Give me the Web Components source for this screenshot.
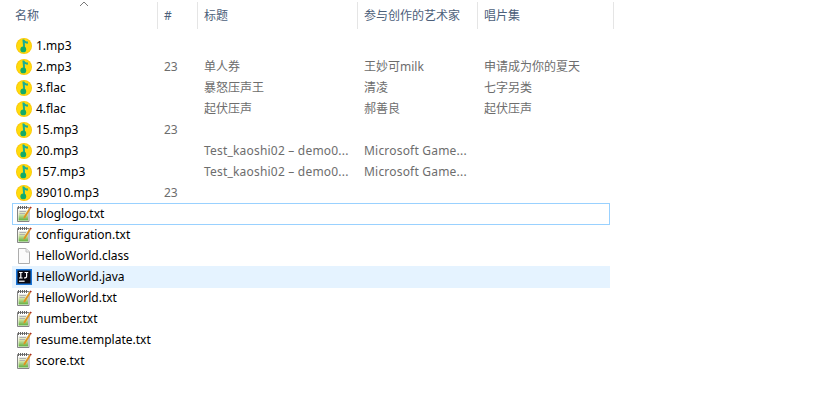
<!DOCTYPE html>
<html>
<head>
<meta charset="utf-8">
<title>files</title>
<style>
  html, body { margin: 0; background: #fff; }
</style>
</head>
<body>
<file-list>
  <file-head></file-head>
  <file-row type="qq" name="1.mp3"></file-row>
  <file-row type="qq" name="2.mp3" num="23" song="单人券" artist="王妙可milk" album="申请成为你的夏天"></file-row>
  <file-row type="qq" name="3.flac" song="暴怒压声王" artist="清凌" album="七字另类"></file-row>
  <file-row type="qq" name="4.flac" song="起伏压声" artist="郝善良" album="起伏压声"></file-row>
  <file-row type="qq" name="15.mp3" num="23"></file-row>
  <file-row type="qq" name="20.mp3" wide song="Test_kaoshi02 – demo0..." artist="Microsoft Game..."></file-row>
  <file-row type="qq" name="157.mp3" wide song="Test_kaoshi02 – demo0..." artist="Microsoft Game..."></file-row>
  <file-row type="qq" name="89010.mp3" num="23"></file-row>
  <file-row type="txt" name="bloglogo.txt" state="focus"></file-row>
  <file-row type="txt" name="configuration.txt"></file-row>
  <file-row type="blank" name="HelloWorld.class"></file-row>
  <file-row type="idea" name="HelloWorld.java" state="hover"></file-row>
  <file-row type="txt" name="HelloWorld.txt"></file-row>
  <file-row type="txt" name="number.txt"></file-row>
  <file-row type="txt" name="resume.template.txt"></file-row>
  <file-row type="txt" name="score.txt"></file-row>
</file-list>

<script>
const FONT = '"Noto Sans", "Noto Sans CJK SC", sans-serif';

// icons are all 16x16
const ICONS = {
  qq: `<svg width="16" height="16" viewBox="0 0 16 16">
    <circle cx="8" cy="8" r="8" fill="#fbc80a"/>
    <circle cx="8" cy="8" r="7.2" fill="#ffdb0c"/>
    <path d="M6.4 1.4 L8.2 1.4 C8.8 2.8 10.2 3.6 12 3.4 L11.8 5.8 C10.6 5.8 9.6 5.4 8.8 4.8 L9.2 11 L7.4 11 Z" fill="#17ad94"/>
    <circle cx="7.3" cy="11.4" r="2.9" fill="#12ab68"/>
  </svg>`,
  txt: `<svg width="16" height="16" viewBox="0 0 16 16">
    <defs>
      <linearGradient id="pad" x1="0" y1="0" x2="0" y2="1">
        <stop offset="0" stop-color="#ececec"/>
        <stop offset=".35" stop-color="#dfe9b4"/>
        <stop offset="1" stop-color="#5fae3c"/>
      </linearGradient>
      <linearGradient id="pen" x1="0" y1="0" x2="1" y2="1">
        <stop offset="0" stop-color="#f7b52c"/>
        <stop offset="1" stop-color="#c86f14"/>
      </linearGradient>
    </defs>
    <path d="M1.5 1.5 H13 V15.5 H1.5 Z" fill="#fff" stroke="#858585"/>
    <rect x="2.5" y="4" width="9.5" height="10.5" fill="url(#pad)"/>
    <path d="M2.5 0 V3 M4.5 0 V3 M6.5 0 V3 M8.5 0 V3 M10.5 0 V3" stroke="#666"/>
    <path d="M3.5 5.5 H10 M3.5 7.5 H9" stroke="#b0b0b0"/>
    <path d="M7.8 10.6 L13.4 1.8 L14.8 2.8 L9.4 11.6 L7.4 12.8 Z" fill="url(#pen)"/>
    <path d="M13.4 1.8 L14.4 .4 L15.8 1.4 L14.8 2.8 Z" fill="#a92c1a"/>
  </svg>`,
  blank: `<svg width="16" height="16" viewBox="0 0 16 16">
    <path d="M2.5 .5 H10 L13.5 4 V15.5 H2.5 Z" fill="#fbfbfb" stroke="#adadad"/>
    <path d="M10 .5 V4 H13.5" fill="#ececec" stroke="#c4c4c4"/>
  </svg>`,
  idea: `<svg width="16" height="16" viewBox="0 0 16 16">
    <rect x=".75" y=".75" width="14.5" height="14.5" fill="#0a0a12" stroke="#1a74d6" stroke-width="1.5"/>
    <path d="M3 3.5 H6.6 M4.8 3.5 V9 M3 9 H6.6 M10.6 3.5 V7.6 Q10.6 9 8 9 M8.6 3.5 H12.2" stroke="#fff" stroke-width="1.2" fill="none"/>
    <path d="M3 12.2 H8.6" stroke="#fff" stroke-width="1.2"/>
  </svg>`
};

const headTemplate = document.createElement('template');
headTemplate.innerHTML = `
  <style>
    :host {
      display: grid;
      grid-template-columns: 158px 40px 160px 120px 136px;
      height: 27px;
      margin: 2px 0 7px;
      width: 614px;
      font: 12px ${FONT};
      color: #4c607a;
    }
    div {
      border-right: 1px solid #e5e5e5;
      padding-left: 6px;
      line-height: 27px;
      position: relative;
    }
    div:first-of-type { padding-left: 15px; }
    svg { position: absolute; left: 79px; top: -1px; }
  </style>
  <div>名称<svg width="10" height="6" viewBox="0 0 10 6"><path d="M1 5 L5 1 L9 5" fill="none" stroke="#7a7a7a"/></svg></div>
  <div>#</div>
  <div>标题</div>
  <div>参与创作的艺术家</div>
  <div>唱片集</div>
`;

class FileHead extends HTMLElement {
  constructor() {
    super();
    this.attachShadow({mode: 'open'});
    this.shadowRoot.appendChild(headTemplate.content.cloneNode(true));
  }
}

const rowTemplate = document.createElement('template');
rowTemplate.innerHTML = `
  <style>
    :host {
      display: grid;
      grid-template-columns: 148px 40px 160px 120px 1fr;
      align-items: center;
      box-sizing: border-box;
      height: 22px;
      margin: -1px 0 0 12px;
      width: 598px;
      padding-left: 4px;
      font: 12px/20px ${FONT};
      color: #6d6d6d;
      white-space: nowrap;
    }
    :host([state="focus"]) { border: 1px solid #99d1ff; padding-left: 3px; }
    :host([state="hover"]) { background: #e5f3ff; }
    :host([wide]) .song, :host([wide]) .artist { letter-spacing: .2px; }
    .name { display: flex; align-items: center; gap: 4px; color: #000; }
    svg { display: block; flex: none; }
  </style>
  <div class="name"><span class="icon"></span><span class="file"></span></div>
  <div class="num"></div>
  <div class="song"></div>
  <div class="artist"></div>
  <div class="album"></div>
`;

class FileRow extends HTMLElement {
  constructor() {
    super();
    this.attachShadow({mode: 'open'});
    this.shadowRoot.appendChild(rowTemplate.content.cloneNode(true));
    const root = this.shadowRoot;
    root.querySelector('.icon').innerHTML = ICONS[this.getAttribute('type')];
    root.querySelector('.file').textContent = this.getAttribute('name');
    for (const key of ['num', 'song', 'artist', 'album']) {
      root.querySelector('.' + key).textContent = this.getAttribute(key) || '';
    }
  }
}

const listTemplate = document.createElement('template');
listTemplate.innerHTML = `
  <style>
    :host { display: block; height: 416px; overflow: hidden; background: #fff; }
  </style>
  <slot></slot>
`;

class FileList extends HTMLElement {
  constructor() {
    super();
    this.attachShadow({mode: 'open'});
    this.shadowRoot.appendChild(listTemplate.content.cloneNode(true));
  }
}

customElements.define('file-head', FileHead);
customElements.define('file-row', FileRow);
customElements.define('file-list', FileList);
</script>
</body>
</html>
